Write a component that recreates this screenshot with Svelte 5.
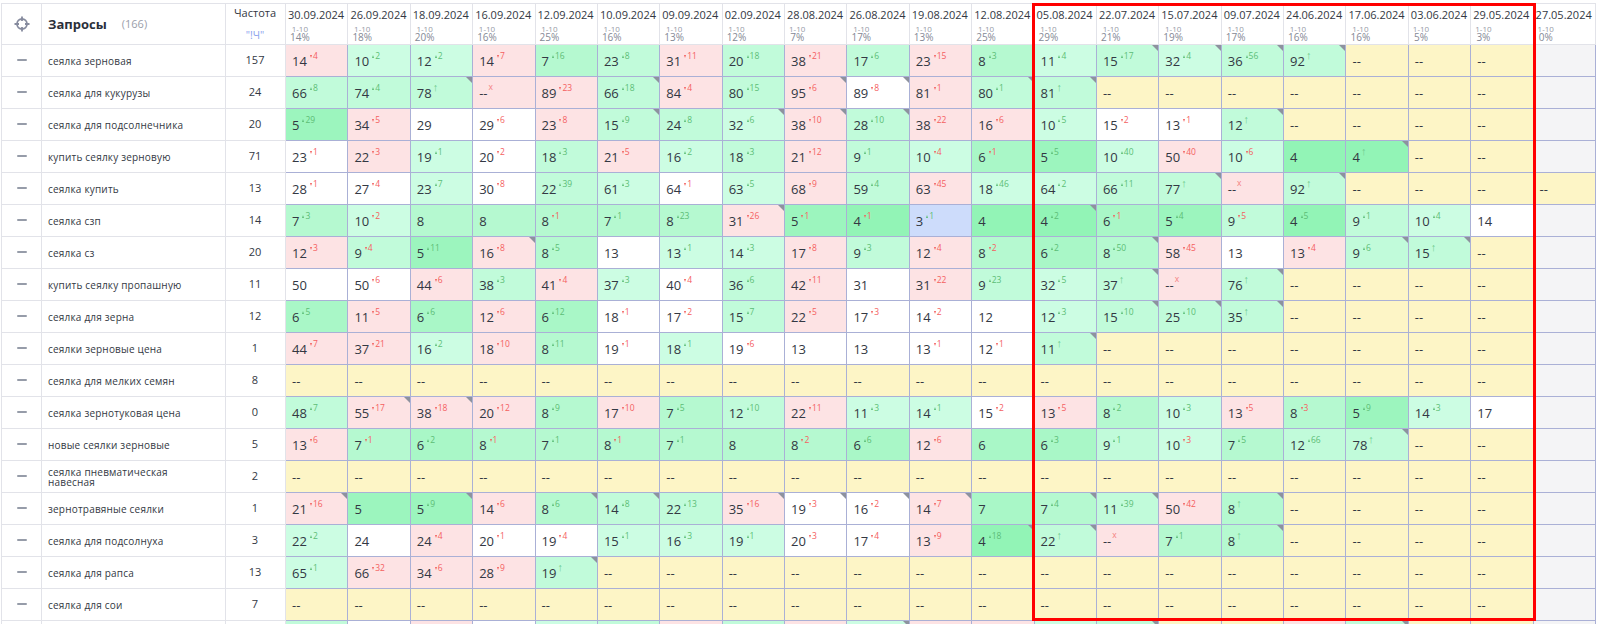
<script lang="ts">
    const dates = [
        ["30.09.2024", "14%"], ["26.09.2024", "18%"], ["18.09.2024", "20%"], ["16.09.2024", "16%"],
        ["12.09.2024", "25%"], ["10.09.2024", "16%"], ["09.09.2024", "13%"], ["02.09.2024", "12%"],
        ["28.08.2024", "7%"], ["26.08.2024", "17%"], ["19.08.2024", "13%"], ["12.08.2024", "25%"],
        ["05.08.2024", "29%"], ["22.07.2024", "21%"], ["15.07.2024", "19%"], ["09.07.2024", "17%"],
        ["24.06.2024", "16%"], ["17.06.2024", "16%"], ["03.06.2024", "5%"], ["29.05.2024", "3%"],
        ["27.05.2024", "0%"],
    ];

    // value, delta (+n, -n, ^ new, x lost), shade letter, * = has a note corner
    const raw: [string, string, string][] = [
        ["сеялка зерновая", "157", "14-4p 10+2l 12+2l 14-7p 7+16n 23+8m 31-11p 20+18m 38-21p 17+6m 23-15p 8+3n 11+4l 15+17m* 32+4l* 36+56m* 92^m* -- -- -- ."],
        ["сеялка для кукурузы", "24", "66+8m 74+4m 78^m* --xp 89-23p 66+18m* 84-4p 80+15m 95-6p* 89-8w* 81-1p 80+1m* 81^m* -- -- -- -- -- -- -- ."],
        ["сеялка для подсолнечника", "20", "5+29q 34-5p 29w 29-6w 23-8p 15+9m* 24+8m 32+6l* 38-10p* 28+10m* 38-22p 16-6p 10+5l 15-2w 13-1w 12^m* -- -- -- -- ."],
        ["купить сеялку зерновую", "71", "23-1w 22-3p 19+1l 20-2w 18+3m 21-5p 16+2l 18+3m 21-12p 9+1m 10-4l 6-1o 5+5q 10+40l 50-40p 10-6l 4r 4^r* -- -- ."],
        ["сеялка купить", "13", "28-1w 27-4w 23+7l 30-8w 22+39m 61+3l 64-1w 63+5l 68-9p 59+4m 63-45p 18+46l 64+2l 66+11m 77^m* --xp 92^m* -- -- -- --"],
        ["сеялка сзп", "14", "7+3n 10-2l 8n 8n 8-1n 7+1n 8+23n 31-26p* 5-1q 4-1r 3+1b 4r 4+2r* 6-1o 5+4q 9-5m 4+5r 9+1m 10+4l 14w ."],
        ["сеялка сз", "20", "12-3p 9-4m 5+11q 16-8p* 8+5n 13w 13+1l 14+3l 17-8p 9+3m 12-4p 8-2n 6+2o 8+50n* 58-45p 13w 13-4p 9+6m* 15^m* -- ."],
        ["купить сеялку пропашную", "11", "50w 50-6w 44-6p 38+3m 41-4p 37+3l 40-4w 36+6m 42-11p 31w 31-22p 9+23m 32+5l 37^m* --xp 76^m* -- -- -- -- ."],
        ["сеялка для зерна", "12", "6+5o 11-5p 6+6o 12-6p 6+12o 18-1w 17-2w 15+7m 22-5p 17-3w 14-2w 12w 12+3l 15+10m* 25+10m* 35^m* -- -- -- -- ."],
        ["сеялки зерновые цена", "1", "44-7p 37-21p 16+2l 18-10p 8+11n 19-1w 18+1l 19-6w 13w 13w 13-1w 12-1w 11^m* -- -- -- -- -- -- -- ."],
        ["сеялка для мелких семян", "8", "-- -- -- -- -- -- -- -- -- -- -- -- -- -- -- -- -- -- -- -- ."],
        ["сеялка зернотуковая цена", "0", "48+7m 55-17p* 38-18p* 20-12p 8+9n 17-10p 7+5n 12+10m 22-11p 11+3l 14+1l 15-2w 13-5p 8+2n 10+3l 13-5p 8-3n 5+9q 14+3l 17w ."],
        ["новые сеялки зерновые", "5", "13-6p 7-1n 6+2o 8-1n 7+1n 8-1n 7+1n 8n 8-2n 6+6o 12-6p 6o 6+3o 9+1m 10-3l 7+5n 12+66m 78^m* -- -- ."],
        ["сеялка пневматическая навесная", "2", "-- -- -- -- -- -- -- -- -- -- -- -- -- -- -- -- -- -- -- -- ."],
        ["зернотравяные сеялки", "1", "21-16p* 5q 5+9q* 14-6p 8+6n* 14+8m* 22+13m 35-16p* 19-3w* 16-2w* 14-7p* 7o 7+4n* 11+39m* 50-42p 8^n* -- -- -- -- ."],
        ["сеялка для подсолнуха", "3", "22+2l 24w 24-4p 20-1w 19-4w 15+1l 16+3l 19+1l 20-3w 17-4w 13-9p 4+18r* 22^m* --xp 7+1n 8^n* -- -- -- -- ."],
        ["сеялка для рапса", "13", "65+1l 66-32p 34-6p 28-9p 19^m* -- -- -- -- -- -- -- -- -- -- -- -- -- -- -- ."],
        ["сеялка для сои", "7", "-- -- -- -- -- -- -- -- -- -- -- -- -- -- -- -- -- -- -- -- ."],
        // only a few pixels of this row are on screen, so it has colours and no text
        ["", "", "1m 1w 1p 1w 1l 1m 1p 1m 1p 1l* 1p 1p 1l 1m* -- -- 1p 1m* -- -- ."],
    ];

    function parseCell(token: string) {
        if (token === ".") return { value: "", delta: "", shade: "e", corner: false };
        const m = token.match(/^(\d+|--)([+-]\d+|\^|x)?([a-z])?(\*)?$/);
        return {
            value: m[1],
            delta: m[2] ?? "",
            shade: m[3] ?? "y",
            corner: !!m[4],
        };
    }

    const rows = raw.map(([query, freq, cells], i) => ({
        query,
        freq,
        last: i === raw.length - 1,
        cells: cells.split(" ").map(parseCell),
    }));
</script>

<div class="page">
    <div class="grid">
        <div class="head ctl">
            <svg width="16" height="16" viewBox="0 0 16 16" fill="none" stroke="#868b9e">
                <circle cx="8" cy="8" r="5" stroke-width="1.8" />
                <path d="M8 0.5v4.5M8 11v4.5M0.5 8h4.5M11 8h4.5" stroke-width="1.8" />
            </svg>
        </div>
        <div class="head title"><b>Запросы</b><span class="count">(166)</span></div>
        <div class="head freq">
            <span>Частота</span>
            <span class="quote">"!Ч"</span>
        </div>
        {#each dates as [date, pct]}
            <div class="head date">
                <span class="day">{date}</span>
                <span class="range">
                    <span>1-10</span>
                    <span class="pct">{pct}</span>
                </span>
            </div>
        {/each}

        {#each rows as row}
            <div class="row">
                <div class="side ctl"><span class="dash"></span></div>
                <div class="side query">{row.query}</div>
                <div class="side num">{row.freq}</div>
                {#each row.cells as cell}
                    <div class="cell {cell.shade}" class:corner={cell.corner}>
                        {#if !row.last}
                            <span class="val">{cell.value}</span>
                            {#if cell.delta === "^"}
                                <span class="mark up">↑</span>
                            {:else if cell.delta === "x"}
                                <span class="mark gone">x</span>
                            {:else if cell.delta}
                                <span class="mark" class:rise={cell.delta[0] === "+"} class:fall={cell.delta[0] === "-"}>
                                    <i></i>{cell.delta.slice(1)}
                                </span>
                            {/if}
                        {/if}
                    </div>
                {/each}
            </div>
        {/each}

        <div class="frame"></div>
    </div>
</div>

<style>
    :global(body) {
        margin: 0;
        background: #fff;
        overflow: hidden;
    }

    .page {
        height: 624px;
        overflow: hidden;
        padding: 3px 0 0 1px;
        box-sizing: border-box;
        font-family: "Open Sans", "Noto Sans", sans-serif;
        color: #333843;
    }

    .grid {
        position: relative;
        display: grid;
        width: 1595px;
        grid-template-columns: 41px 184px 60px repeat(21, 1fr);
        grid-template-rows: 42px;
        grid-auto-rows: 32px;
    }

    .row {
        display: contents;
    }

    .head {
        box-sizing: border-box;
        border-top: 1px solid #e2e3e9;
        border-right: 1px solid #e2e3e9;
        border-bottom: 1px solid #e2e3e9;
    }

    .ctl {
        display: flex;
        align-items: center;
        justify-content: center;
        border-left: 1px solid #e2e3e9;
    }

    .head.ctl svg {
        margin-bottom: 1px;
    }

    .title {
        display: flex;
        align-items: center;
        padding: 0 0 1px 6px;
        font-size: 13px;
        color: #2b2f3a;
    }

    .count {
        margin-left: 15px;
        font-size: 11px;
        color: #9a9eaa;
    }

    .freq {
        display: flex;
        flex-direction: column;
        align-items: center;
        gap: 8px;
        padding: 1px 1px 0 0;
        font-size: 11px;
        line-height: 15px;
    }

    .quote {
        color: #8ba3ee;
        font-size: 10.5px;
    }

    .date {
        display: flex;
        flex-direction: column;
        padding: 3px 0 0 2px;
        white-space: nowrap;
        overflow: visible;
        min-width: 0;
    }

    .day {
        font-size: 11px;
        line-height: 15px;
    }

    .range {
        display: inline-flex;
        flex-direction: column;
        align-items: center;
        align-self: flex-start;
        margin: 3px 0 0 2px;
        font-size: 8px;
        line-height: 8px;
        color: #969aa6;
    }

    .pct {
        font-size: 10px;
        line-height: 9px;
        color: #858995;
    }

    .side {
        box-sizing: border-box;
        border-right: 1px solid #e2e3e9;
        border-bottom: 1px solid #e2e3e9;
    }

    .dash {
        width: 10px;
        height: 2px;
        margin-bottom: 2px;
        border-radius: 1px;
        background: #969ca9;
    }

    .query {
        display: flex;
        align-items: center;
        padding: 1px 30px 0 6px;
        font-size: 10px;
        line-height: 10.5px;
        letter-spacing: 0.02em;
    }

    .num {
        display: flex;
        align-items: center;
        justify-content: center;
        padding: 0 1px 2px 0;
        font-size: 11px;
    }

    .cell {
        position: relative;
        display: flex;
        box-sizing: border-box;
        align-items: center;
        padding-left: 6px;
        min-width: 0;
        border-right: 1px solid #aab0d6;
        border-bottom: 1px solid #aab0d6;
        font-size: 13px;
        white-space: nowrap;
    }

    .mark {
        display: inline-flex;
        align-items: center;
        align-self: flex-start;
        margin: 6px 0 0 3px;
        font-size: 8.5px;
        line-height: 10px;
    }

    .mark i {
        width: 0;
        height: 0;
        margin-right: 1px;
        border-left: 1.5px solid transparent;
        border-right: 1.5px solid transparent;
    }

    .rise {
        color: #5cbd76;
    }

    .rise i {
        border-bottom: 3px solid #5cbd76;
    }

    .fall {
        color: #f4605f;
    }

    .fall i {
        border-top: 3px solid #f4605f;
    }

    .up {
        margin-left: 1px;
        margin-top: 5px;
        font-family: "Liberation Sans", sans-serif;
        font-size: 11px;
        color: #6fcb8e;
    }

    .gone {
        margin-left: 1px;
        margin-top: 5px;
        color: #f4807f;
    }

    .corner::after {
        content: "";
        position: absolute;
        top: 0;
        right: 0;
        border-top: 6px solid #8d929e;
        border-left: 6px solid transparent;
    }

    .p { background: #fde3e4; }
    .w { background: #fff; }
    .l { background: #ccfde3; }
    .m { background: #c1fbda; }
    .n { background: #b5f9d0; }
    .o { background: #a9f7c7; }
    .q { background: #9cf5be; }
    .r { background: #92f4b6; }
    .b { background: #cddcfb; }
    .y { background: #fdf5c6; }
    .e { background: #f4f4f6; }

    .frame {
        position: absolute;
        left: 1031px;
        top: 0;
        width: 504px;
        height: 618px;
        box-sizing: border-box;
        border: 3px solid #f00;
        pointer-events: none;
    }
</style>
